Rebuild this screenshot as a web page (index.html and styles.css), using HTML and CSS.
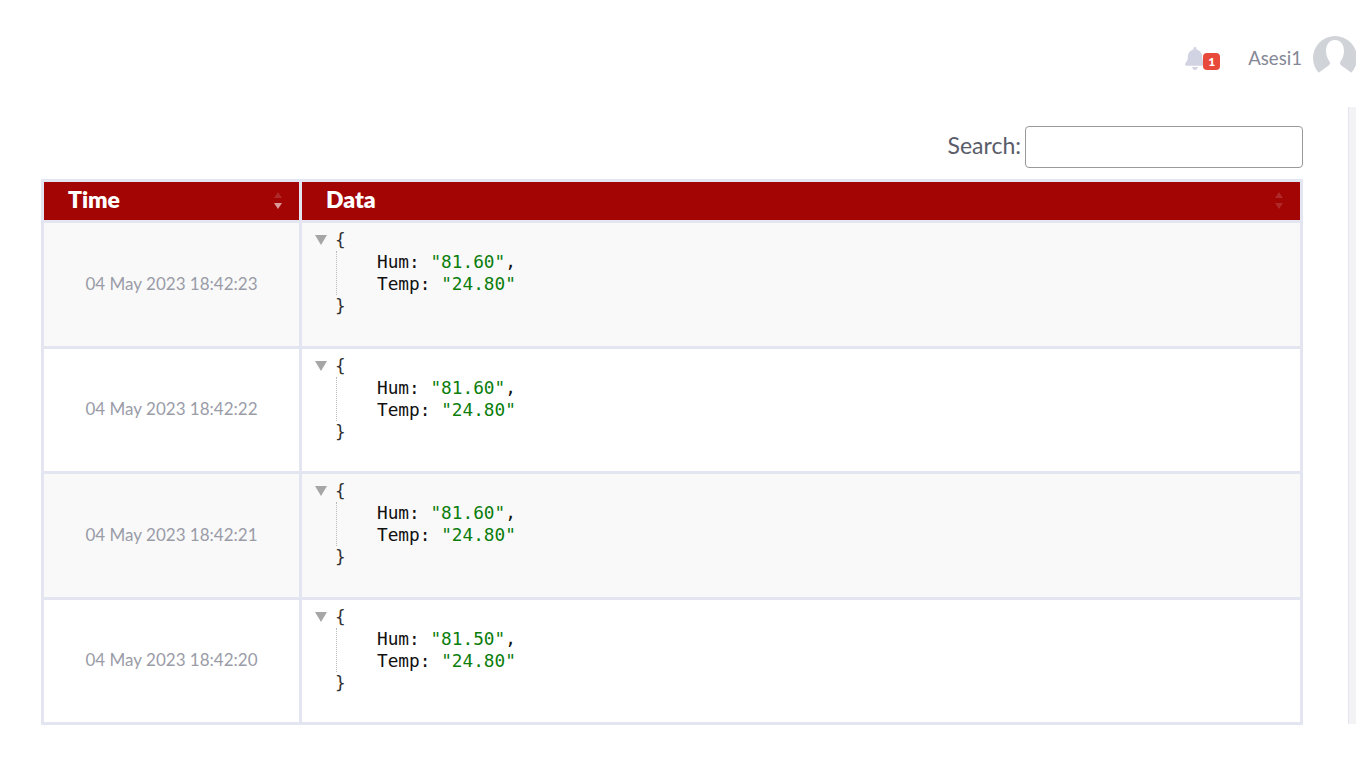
FILE: index.html
```html
<!DOCTYPE html>
<html lang="en">
<head>
    <meta charset="UTF-8">
    <title>Device Data</title>
    <link rel="stylesheet" href="styles.css">
</head>
<body>
    <div class="topbar">
        <div class="bell">
            <svg class="bell-icon" viewBox="0 0 448 512"><path d="M224 512c35.300 0 64-28.700 64-64H160c0 35.300 28.700 64 64 64zm215.400-149.700c-19.300-20.800-55.500-52-55.500-154.300 0-77.700-54.500-139.900-128-155.200V32c0-17.700-14.300-32-32-32s-32 14.300-32 32v20.800C118.400 68.100 64 130.300 64 208c0 102.300-36.200 133.500-55.500 154.300-6 6.400-8.600 14.100-8.500 21.700.1 16.400 13 32 32.100 32h383.800c19.100 0 32-15.600 32.100-32 .1-7.600-2.500-15.300-8.500-21.700z"/></svg>
            <span class="badge">1</span>
        </div>
        <span class="username">Asesi1</span>
        <svg class="avatar" viewBox="0 0 44 44">
            <circle cx="22" cy="22" r="22" fill="#d0d3d8"/>
            <path d="M22 4c5.500 0 9 4.500 9 11 0 4-1.500 8-3.500 10.500-1 1.500-.5 3.500 1.500 4.500l9 6.500V44H6v-7.500l9-6.500c2-1 2.500-3 1.500-4.500C14.500 23 13 19 13 15c0-6.500 3.500-11 9-11z" fill="#fff"/>
        </svg>
    </div>

    <div class="layout">
        <div class="content">
            <div class="search-row">
                <label class="search-label" for="search">Search:</label>
                <input class="search-input" id="search" type="search">
            </div>
            <table class="data-table">
                <thead>
                    <tr>
                        <th class="col-time"><div class="th-inner"><span>Time</span><span class="sort sort-desc"><i class="up"></i><i class="down"></i></span></div></th>
                        <th class="col-data"><div class="th-inner"><span>Data</span><span class="sort"><i class="up"></i><i class="down"></i></span></div></th>
                    </tr>
                </thead>
                <tbody>
                    <tr class="odd">
                        <td class="time-cell">04 May 2023 18:42:23</td>
                        <td class="data-cell">
                            <div class="json"><div class="json-open"><i class="toggler"></i>{</div><div class="json-body"><div>Hum: <span class="str">"81.60"</span>,</div><div>Temp: <span class="str">"24.80"</span></div></div><div class="json-close">}</div></div>
                        </td>
                    </tr>
                    <tr>
                        <td class="time-cell">04 May 2023 18:42:22</td>
                        <td class="data-cell">
                            <div class="json"><div class="json-open"><i class="toggler"></i>{</div><div class="json-body"><div>Hum: <span class="str">"81.60"</span>,</div><div>Temp: <span class="str">"24.80"</span></div></div><div class="json-close">}</div></div>
                        </td>
                    </tr>
                    <tr class="odd">
                        <td class="time-cell">04 May 2023 18:42:21</td>
                        <td class="data-cell">
                            <div class="json"><div class="json-open"><i class="toggler"></i>{</div><div class="json-body"><div>Hum: <span class="str">"81.60"</span>,</div><div>Temp: <span class="str">"24.80"</span></div></div><div class="json-close">}</div></div>
                        </td>
                    </tr>
                    <tr>
                        <td class="time-cell">04 May 2023 18:42:20</td>
                        <td class="data-cell">
                            <div class="json"><div class="json-open"><i class="toggler"></i>{</div><div class="json-body"><div>Hum: <span class="str">"81.50"</span>,</div><div>Temp: <span class="str">"24.80"</span></div></div><div class="json-close">}</div></div>
                        </td>
                    </tr>
                </tbody>
            </table>
        </div>
        <div class="scroll-strip"></div>
    </div>
</body>
</html>
```

FILE: styles.css
```css
html, body {
    margin: 0;
    height: 768px;
    overflow: hidden;
    background: #fff;
    font-family: "Lato", "Open Sans", sans-serif;
    color: #858796;
}
.topbar {
    height: 107px;
    box-sizing: border-box;
    padding: 36px 0 0 0;
    margin-right: -1px;
    display: flex;
    justify-content: flex-end;
    align-items: flex-start;
}
.bell {
    display: flex;
    align-items: flex-start;
    margin: 11px 28px 0 0;
}
.bell-icon {
    width: 20px;
    height: 23px;
    fill: #d1d3e2;
}
.badge {
    width: 17px;
    height: 17px;
    margin: 6px 0 0 -2px;
    background: #e74a3b;
    border-radius: 4px;
    color: #fff;
    font-size: 12px;
    font-weight: 900;
    line-height: 17px;
    text-align: center;
}
.username {
    font-size: 18.6px;
    line-height: 44px;
    margin-right: 11px;
}
.avatar {
    width: 44px;
    height: 44px;
}
.layout {
    display: flex;
    align-items: flex-start;
}
.content {
    width: 1262px;
    margin: 0 45px 0 41px;
}
.search-row {
    display: flex;
    justify-content: flex-end;
    align-items: center;
    gap: 4px;
    padding-top: 19px;
    margin-bottom: 11px;
}
.search-label {
    font-size: 23px;
    padding-bottom: 4px;
    color: #5a5c69;
}
.search-input {
    width: 278px;
    height: 42px;
    box-sizing: border-box;
    border: 1px solid #999;
    border-radius: 4px;
    background: #fff;
}
.data-table {
    width: 1262px;
    height: 546px;
    table-layout: fixed;
    border-collapse: collapse;
}
.col-time { width: 255px; }
.data-table th, .data-table td {
    border: 3px solid #e3e6f0;
    padding: 0;
}
.data-table th {
    height: 38px;
    background: #a30404;
    color: #fff;
    font-size: 23px;
    font-weight: 800;
    text-align: left;
    border-bottom: 1px solid #8f1a1a;
}
.th-inner {
    display: flex;
    justify-content: space-between;
    align-items: center;
    padding: 0 17px 5px 24px;
}
.sort {
    display: flex;
    flex-direction: column;
    gap: 5px;
    padding-top: 3px;
}
.sort i {
    display: block;
    border-left: 4px solid transparent;
    border-right: 4px solid transparent;
}
.sort .up {
    border-bottom: 6px solid rgba(255, 255, 255, 0.15);
}
.sort .down {
    border-top: 6px solid rgba(255, 255, 255, 0.15);
}
.sort-desc .down {
    border-top-color: rgba(255, 255, 255, 0.6);
}
.odd td {
    background: #f9f9f9;
}
.data-table .time-cell {
    padding-bottom: 2px;
    font-size: 17px;
    text-align: center;
    color: #9a9ca8;
}
.data-cell {
    vertical-align: top;
}
.json {
    padding: 6px 0 0 33px;
    font-family: "DejaVu Sans Mono", monospace;
    font-size: 17.75px;
    line-height: 22px;
    color: #111;
}
.json-open {
    position: relative;
    color: #333;
}
.toggler {
    position: absolute;
    left: -20px;
    top: 6px;
    border-left: 6px solid transparent;
    border-right: 6px solid transparent;
    border-top: 10px solid #a6a6a6;
}
.json-body {
    margin-left: 1px;
    padding-left: 40px;
    border-left: 1px dotted #bbb;
}
.json-close {
    color: #333;
}
.str {
    color: #0b7d0b;
}
.scroll-strip {
    width: 8px;
    height: 617px;
    box-sizing: border-box;
    background: #f3f3f6;
    border-left: 1px solid #e3e6f0;
}
```
